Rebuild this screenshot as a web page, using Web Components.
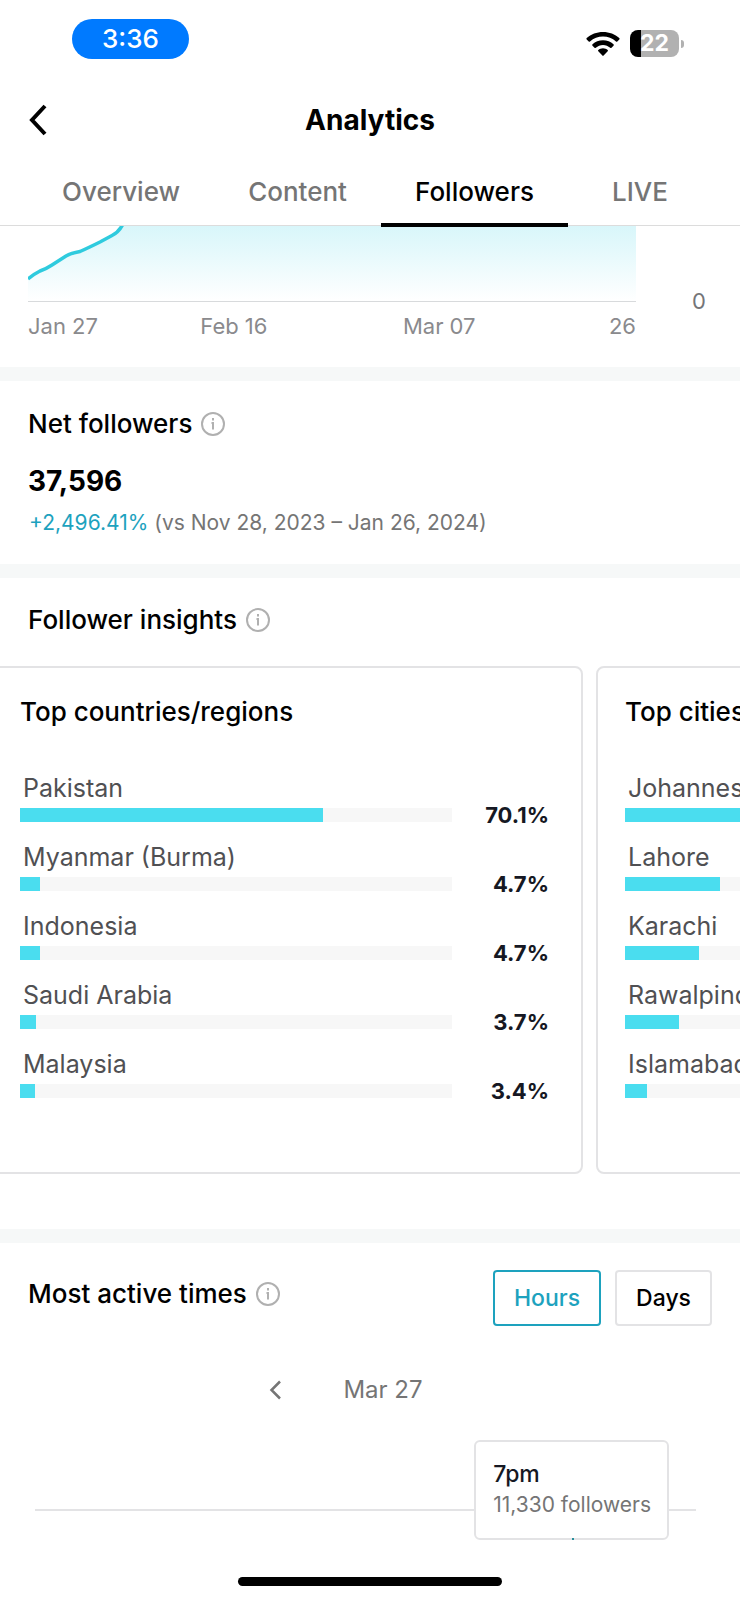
<!DOCTYPE html>
<html lang="en">
<head>
<meta charset="utf-8">
<meta name="viewport" content="width=device-width, initial-scale=1">
<title>Analytics</title>
<style>
  body { margin: 0; background: #fff; color: #000; font-family: Inter, "Liberation Sans", sans-serif; }
</style>
</head>
<body>
<analytics-app></analytics-app>

<script>
const define = (name, html, setup) => {
  const template = document.createElement('template');
  template.innerHTML = `<style>
    *, *::before, *::after { box-sizing: border-box; }
    h1, h2, h3, p, ul { margin: 0; padding: 0; list-style: none; }
    button { font: inherit; margin: 0; padding: 0; border: 0; background: none; cursor: pointer; }
    svg { display: block; }
  </style>` + html;
  customElements.define(name, class extends HTMLElement {
    connectedCallback() {
      if (this.shadowRoot) return;
      const root = this.attachShadow({ mode: 'open' });
      root.append(template.content.cloneNode(true));
      if (setup) setup(root, this);
    }
  });
};

define('status-bar', `<style>
    :host { display: flex; justify-content: space-between; align-items: flex-start; height: 80px; padding: 19px 56px 0 72px; }
    .time { width: 117px; border-radius: 20px; background: #007aff; color: #fff; font-size: 26px; line-height: 40px; text-align: center; font-weight: 500; }
    .icons { display: flex; align-items: center; gap: 10px; padding-top: 11px; }
    .battery { display: flex; align-items: center; gap: 2px; }
    .cell { width: 49px; border-radius: 8px; background: linear-gradient(90deg, #000 11px, #b1b1b1 11px); color: #fff; font-size: 23px; line-height: 27px; font-weight: 700; text-align: center; }
    .tip { width: 3px; height: 8px; border-radius: 0 4px 4px 0; background: #b1b1b1; }
  </style>
  <span class="time">3:36</span>
  <div class="icons">
    <svg width="34" height="26" viewBox="0 0 34 26" role="img" aria-label="Wi-Fi">
      <path d="M17 1C10.600 1 5 3.300.7 7.100q-.7.700 0 1.400l2 2q.6.600 1.300 0C7.600 7.300 12.100 5.500 17 5.500s9.400 1.800 13 5q.7.600 1.300 0l2-2q.7-.7 0-1.400C29 3.300 23.400 1 17 1z"/>
      <path d="M17 9.300c-4.100 0-7.700 1.500-10.500 4q-.7.700 0 1.400l2 2q.6.600 1.300.100c2-1.800 4.500-2.900 7.200-2.900s5.200 1.100 7.200 2.900q.7.500 1.300-.1l2-2q.7-.7 0-1.400c-2.800-2.500-6.400-4-10.500-4z"/>
      <path d="M17 17.300c-1.800 0-3.500.700-4.700 1.800q-.6.600 0 1.200l4.100 4.300q.6.600 1.200 0l4.100-4.300q.6-.6 0-1.200c-1.200-1.100-2.900-1.800-4.700-1.800z"/>
    </svg>
    <div class="battery"><span class="cell">22</span><span class="tip"></span></div>
  </div>`);

define('nav-bar', `<style>
    :host { display: grid; grid-template-columns: 48px 1fr 48px; align-items: center; height: 80px; padding: 0 20px; }
    button { display: grid; place-items: center; width: 36px; height: 48px; }
    h1 { font-size: 28px; line-height: 36px; font-weight: 700; text-align: center; }
  </style>
  <button type="button" aria-label="Back">
    <svg width="20" height="32" viewBox="0 0 20 32"><path d="M17 2 4 16 17 30" fill="none" stroke="#000" stroke-width="4"/></svg>
  </button>
  <h1><slot></slot></h1>`);

define('tab-bar', `<style>
    :host { display: block; border-bottom: 1px solid #dcdcdc; }
    nav { display: flex; height: 65px; padding: 0 28px; }
    a { flex: 1 1 auto; padding: 0 32px; margin-bottom: -2px; border-bottom: 4px solid transparent; color: #757575; font-size: 26px; line-height: 63px; font-weight: 500; text-align: center; text-decoration: none; }
    a:last-child { flex: 0 0 auto; width: 144px; }
    a[aria-current] { color: #000; border-color: #000; position: relative; }
  </style>
  <nav>
    <a href="#overview">Overview</a><a href="#content">Content</a><a href="#followers" aria-current="page">Followers</a><a href="#live">LIVE</a>
  </nav>`);

define('info-heading', `<style>
    :host { display: flex; align-items: center; gap: 8px; }
    h2 { font-size: 26px; line-height: 32px; font-weight: 500; }
    button { width: 26px; height: 26px; }
  </style>
  <h2><slot></slot></h2>
  <button type="button" aria-label="More information">
    <svg width="26" height="26" viewBox="0 0 26 26" fill="none" stroke="#b0b0b0" stroke-width="2"><circle cx="13" cy="13" r="11"/><path d="M11.500 12H13.500M13 11v7.500M13 7v2.500"/></svg>
  </button>`);

define('panel-section', `<style>
    :host { display: block; border-bottom: 14px solid #f6f8f8; }
    :host([last]) { border: 0; }
  </style><slot></slot>`);

define('growth-chart', `<style>
    :host { display: grid; grid-template-columns: 1fr 104px; height: 141px; padding-left: 28px; color: #8a8a8d; font-size: 22px; line-height: 30px; }
    .plot { height: 76px; border-bottom: 1px solid #d8dadc; }
    .plot svg { width: 100%; height: 75px; }
    .days { display: grid; grid-template-columns: 17fr 20fr 11fr 12fr; padding-top: 9px; }
    .days span:last-child { text-align: right; }
    .axis { padding: 60px 34px 0 0; color: #757578; text-align: right; }
  </style>
  <div>
    <div class="plot">
      <svg viewBox="0 0 608 75" preserveAspectRatio="none" role="img" aria-label="Follower growth">
        <defs><linearGradient id="fade" x1="0" y1="0" x2="0" y2="1"><stop offset="0" stop-color="#d8f6fa"/><stop offset="1" stop-color="#fff"/></linearGradient></defs>
        <path fill="url(#fade)" d="M0 53Q6 48 12 45Q18 43 24 39L38 30Q43 27 52 25.500Q60 22 72 16L84 9.500Q90 6 94 0H608V75H0z"/>
        <path fill="none" stroke="#2fcbde" stroke-width="3.500" d="M0 53Q6 48 12 45Q18 43 24 39L38 30Q43 27 52 25.500Q60 22 72 16L84 9.500Q91 6 95-2"/>
      </svg>
    </div>
    <div class="days"><span>Jan 27</span><span>Feb 16</span><span>Mar 07</span><span>26</span></div>
  </div>
  <div class="axis">0</div>`);

define('net-followers', `<style>
    :host { display: block; padding: 27px 28px 28px; }
    .total { padding-top: 25px; font-size: 28px; line-height: 32px; font-weight: 700; }
    .change { padding: 12px 0 0 1px; font-size: 21px; line-height: 27px; color: #757575; }
    .change b { font-weight: 400; color: #1da2be; }
  </style>
  <info-heading>Net followers</info-heading>
  <p class="total">37,596</p>
  <p class="change"><b>+2,496.41%</b> (vs Nov 28, 2023 – Jan 26, 2024)</p>`);

define('share-row', `<style>
    :host { display: grid; grid-template-columns: 1fr 97px; align-items: center; }
    .name { grid-column: 1 / -1; padding-left: 3px; color: #505053; font-size: 25px; line-height: 40px; white-space: nowrap; }
    .track { height: 14px; background: #f7f7f7; }
    .fill { height: 14px; background: #4addef; }
    .value { color: #161823; font-size: 22px; line-height: 14px; font-weight: 700; text-align: right; }
  </style>
  <span class="name"><slot></slot></span>
  <div class="track"><div class="fill"></div></div>
  <span class="value"></span>`, (root, host) => {
    root.querySelector('.fill').style.width = host.getAttribute('value') + '%';
    root.querySelector('.value').textContent = host.getAttribute('value') + '%';
  });

define('insight-card', `<style>
    :host { display: block; flex: 0 0 80vw; box-sizing: border-box; padding: 28px 32px 74px 27px; border: 2px solid #e3e3e5; border-radius: 8px; }
    h3 { font-size: 26px; line-height: 32px; font-weight: 500; }
    .rows { display: grid; gap: 15px; padding-top: 40px; }
  </style>
  <h3><slot name="title"></slot></h3>
  <div class="rows"><slot></slot></div>`);

define('follower-insights', `<style>
    :host { display: block; padding: 26px 0 55px; }
    info-heading { padding: 0 28px; }
    .strip { display: flex; gap: 13px; margin-top: 30px; padding: 0 28px; overflow-x: auto; scrollbar-width: none; }
  </style>
  <info-heading>Follower insights</info-heading>
  <div class="strip">
    <insight-card>
      <span slot="title">Top countries/regions</span>
      <share-row value="70.1">Pakistan</share-row>
      <share-row value="4.7">Myanmar (Burma)</share-row>
      <share-row value="4.7">Indonesia</share-row>
      <share-row value="3.7">Saudi Arabia</share-row>
      <share-row value="3.4">Malaysia</share-row>
    </insight-card>
    <insight-card>
      <span slot="title">Top cities</span>
      <share-row value="30.2">Johannesburg</share-row>
      <share-row value="22.0">Lahore</share-row>
      <share-row value="17.1">Karachi</share-row>
      <share-row value="12.5">Rawalpindi</share-row>
      <share-row value="5.1">Islamabad</share-row>
    </insight-card>
  </div>`, root => { root.querySelector('.strip').scrollLeft = 37; });

define('active-times', `<style>
    :host { display: block; padding: 27px 28px 0; }
    .head { display: flex; justify-content: space-between; align-items: flex-start; }
    info-heading { height: 48px; }
    .modes { display: flex; gap: 14px; }
    .modes button { height: 56px; padding: 0 19px; border: 2px solid #e3e3e5; border-radius: 4px; font-size: 23px; font-weight: 500; color: #000; }
    .modes button[aria-pressed="true"] { border-color: #1da2be; color: #1da2be; }
    .date { display: flex; justify-content: center; align-items: center; gap: 52px; padding: 48px 58px 0 0; color: #757575; font-size: 24px; line-height: 32px; }
    .date button { display: grid; place-items: center; width: 32px; height: 32px; }
    .plot { position: relative; height: 105px; margin: 0 16px 0 7px; border-bottom: 2px solid #e3e3e5; }
    .tooltip { position: absolute; top: 34px; right: 27px; padding: 18px 16px 19px 17px; border: 2px solid #e3e3e5; border-radius: 6px; background: #fff; white-space: nowrap; }
    .tooltip::after { content: ""; position: absolute; top: 100%; left: 50%; width: 2px; height: 2px; background: #2a8f9c; }
    .hour { color: #161823; font-size: 23px; line-height: 28px; font-weight: 500; }
    .count { padding-top: 3px; color: #757575; font-size: 21px; line-height: 28px; }
  </style>
  <div class="head">
    <info-heading>Most active times</info-heading>
    <div class="modes"><button type="button" aria-pressed="true">Hours</button><button type="button" aria-pressed="false">Days</button></div>
  </div>
  <div class="date">
    <button type="button" aria-label="Previous day"><svg width="14" height="20" viewBox="0 0 14 20"><path d="M12 1.500 3.500 10l8.500 8.500" fill="none" stroke="#757575" stroke-width="2.500"/></svg></button>
    <span>Mar 27</span>
  </div>
  <div class="plot"><div class="tooltip"><p class="hour">7pm</p><p class="count">11,330 followers</p></div></div>`);

define('home-indicator', `<style>
    :host { display: flex; justify-content: center; margin-top: auto; padding-bottom: 14px; }
    span { width: 264px; height: 9px; border-radius: 5px; background: #000; }
  </style><span></span>`);

define('analytics-app', `<style>
    :host { display: flex; flex-direction: column; min-height: 100vh; overflow: hidden; }
  </style>
  <status-bar></status-bar>
  <nav-bar>Analytics</nav-bar>
  <tab-bar></tab-bar>
  <panel-section><growth-chart></growth-chart></panel-section>
  <panel-section><net-followers></net-followers></panel-section>
  <panel-section><follower-insights></follower-insights></panel-section>
  <panel-section last><active-times></active-times></panel-section>
  <home-indicator></home-indicator>`);
</script>
</body>
</html>
